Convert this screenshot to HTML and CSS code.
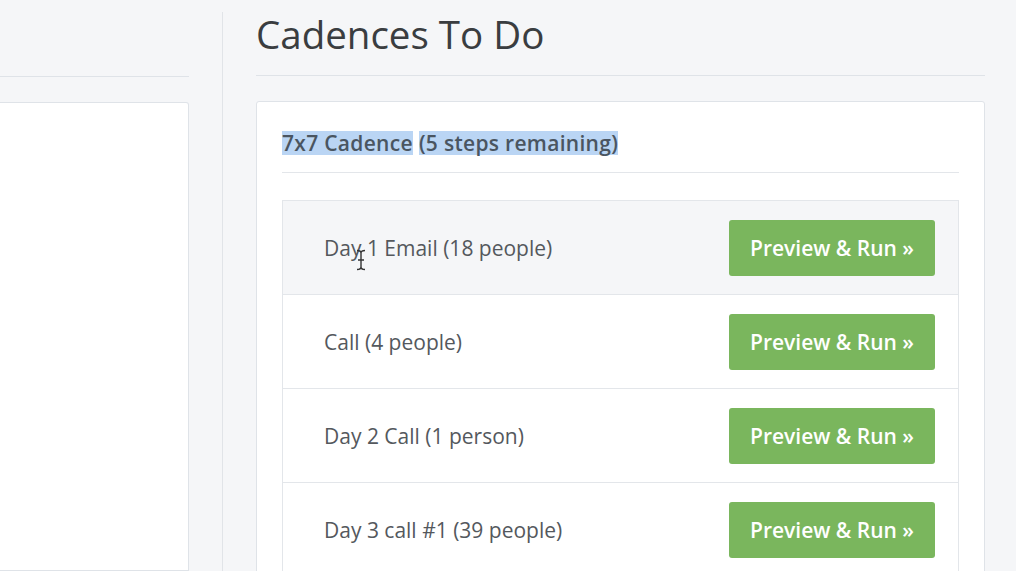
FILE: index.html
```html
<!DOCTYPE html>
<html>
<head>
<meta charset="utf-8">
<link rel="stylesheet" href="styles.css">
</head>
<body>
<div class="page">
  <div class="left">
    <div class="left-head"></div>
    <div class="left-card"></div>
  </div>
  <div class="divider"></div>
  <div class="main">
    <h1 class="title">Cadences To Do</h1>
    <div class="card">
      <div class="card-title"><span class="sel">7x7 Cadence</span><span class="gap"></span><span class="sel">(5 steps remaining)</span></div>
      <div class="list">
        <div class="row hover">
          <span class="label">Day 1 Email (18 people)</span>
          <button class="btn">Preview &amp; Run »</button>
          <svg class="cursor" width="12" height="22" viewBox="0 0 12 22"><path d="M2 1.5 Q6 1.5 6 4 Q6 1.5 10 1.5 M6 4 V18 M3 11 H9 M2 20.5 Q6 20.5 6 18 Q6 20.5 10 20.5" fill="none" stroke="#333" stroke-width="1.4"/></svg>
        </div>
        <div class="row">
          <span class="label">Call (4 people)</span>
          <button class="btn">Preview &amp; Run »</button>
        </div>
        <div class="row">
          <span class="label">Day 2 Call (1 person)</span>
          <button class="btn">Preview &amp; Run »</button>
        </div>
        <div class="row">
          <span class="label">Day 3 call #1 (39 people)</span>
          <button class="btn">Preview &amp; Run »</button>
        </div>
      </div>
    </div>
  </div>
</div>
</body>
</html>
```

FILE: styles.css
```css
html, body {
  margin: 0;
  padding: 0;
  background: #f5f6f8;
  font-family: "Open Sans", "Liberation Sans", sans-serif;
  overflow: hidden;
}
.page {
  display: flex;
  height: 571px;
}
.left {
  width: 189px;
  flex: none;
  display: flex;
  flex-direction: column;
}
.left-head {
  height: 76px;
  border-bottom: 1px solid #dfe3e8;
  flex: none;
}
.left-card {
  margin-top: 25px;
  flex: 1;
  background: #fff;
  border: 1px solid #dfe3e8;
  border-left: none;
  border-radius: 0 3px 0 0;
}
.divider {
  width: 1px;
  flex: none;
  background: #e1e4e8;
  margin: 12px 33px 0 33px;
}
.main {
  width: 729px;
  flex: none;
  display: flex;
  flex-direction: column;
}
.title {
  flex: none;
  margin: 0;
  height: 76px;
  box-sizing: border-box;
  padding-top: 9px;
  font-weight: 400;
  font-size: 38.5px;
  line-height: 50px;
  color: #3a3d40;
  border-bottom: 1px solid #dfe3e8;
  padding-left: 0;
}
.card {
  margin-top: 25px;
  flex: 1;
  background: #fff;
  border: 1px solid #dfe3e8;
  border-radius: 3px 3px 0 0;
  padding: 0 25px;
}
.card-title {
  height: 71px;
  box-sizing: border-box;
  padding-top: 29px;
  border-bottom: 1px solid #e3e6ea;
  font-size: 21px;
  font-weight: 600;
  letter-spacing: 0.3px;
  color: #4a5561;
  display: flex;
  align-items: flex-start;
}
.sel {
  background: #bad5f4;
  line-height: 24px;
  height: 24px;
}
.gap {
  width: 6px;
}
.list {
  margin-top: 27px;
  border: 1px solid #e3e6ea;
  border-bottom: none;
}
.row {
  position: relative;
  height: 93px;
  border-top: 1px solid #e3e6ea;
  display: flex;
  align-items: center;
  justify-content: space-between;
  padding: 0 23px 0 41px;
}
.row:first-child {
  border-top: none;
}
.row.hover {
  background: #f5f6f8;
}
.label {
  font-size: 21px;
  color: #54585d;
}
.btn {
  width: 206px;
  height: 56px;
  border: none;
  border-radius: 3px;
  background: #7ab65d;
  color: #fff;
  font-family: inherit;
  font-size: 21px;
  font-weight: 600;
  padding: 0;
}
.cursor {
  position: absolute;
  left: 72px;
  top: 48px;
}
```
